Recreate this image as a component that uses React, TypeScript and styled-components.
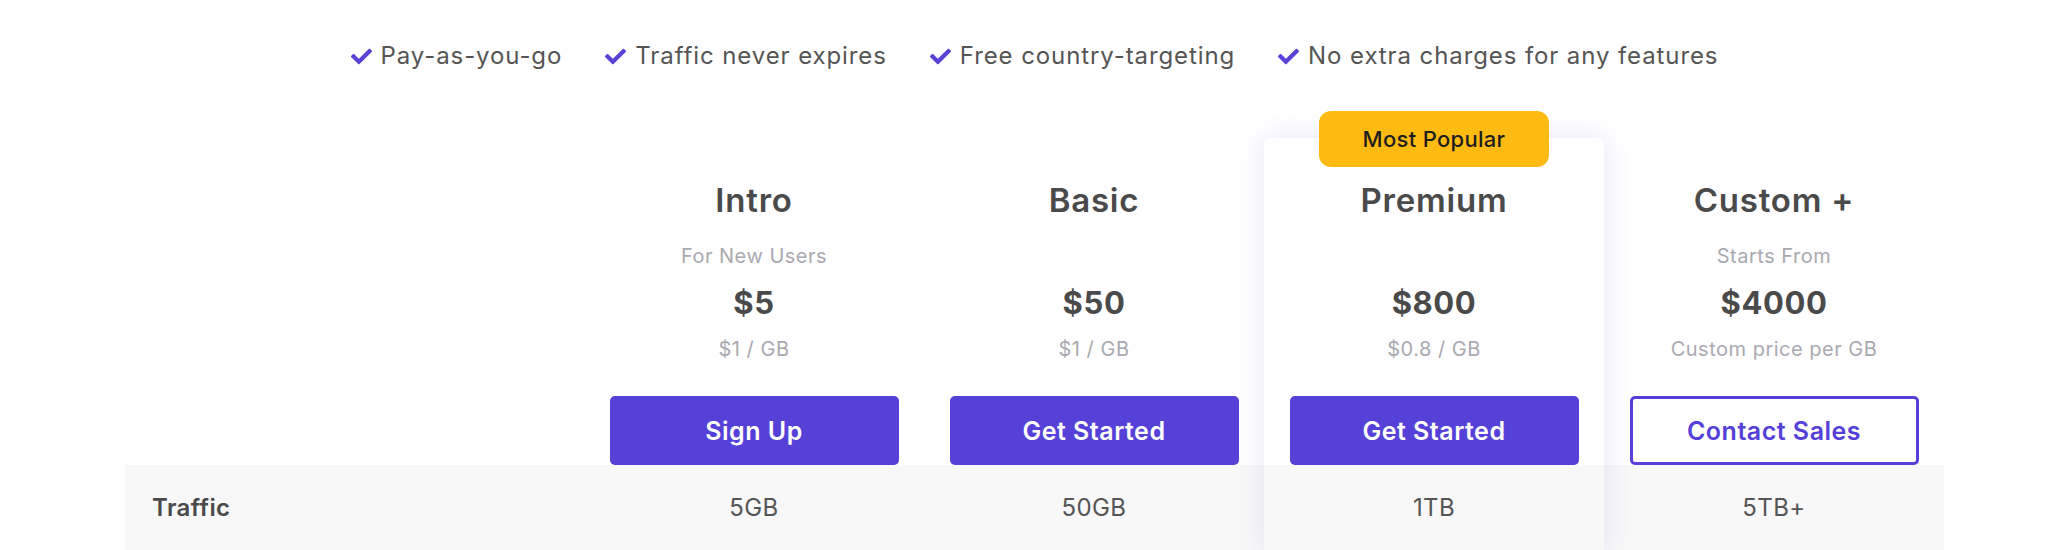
import React from "react";
import styled, { createGlobalStyle } from "styled-components";
import { FaCheck } from "react-icons/fa";

const GlobalStyle = createGlobalStyle`
  html, body { margin: 0; padding: 0; background: #ffffff; }
  body { font-family: Inter, "Open Sans", sans-serif; color: #4a4a4a; }
  * { box-sizing: border-box; }
`;

const Page = styled.div`
  width: 1819px;
  margin-left: 125px;
  padding-top: 41px;
`;

const Features = styled.ul`
  list-style: none;
  margin: 0 0 67px;
  padding: 0;
  display: flex;
  justify-content: center;
  gap: 43px;
  height: 30px;
`;

const Feature = styled.li`
  display: flex;
  align-items: center;
  gap: 9px;
  font-size: 24px;
  letter-spacing: 0.9px;
  line-height: 30px;
  color: #555555;
  svg { color: #5a42d6; width: 21px; height: 21px; }
`;

const Table = styled.div`
  display: grid;
  grid-template-columns: 459px repeat(4, 340px);
  grid-template-rows: auto 85px;
  position: relative;
`;

const RowBand = styled.div`
  grid-column: 1 / -1;
  grid-row: 2;
  background: #f8f8f8;
  z-index: 0;
`;

const FeaturedCard = styled.div`
  grid-column: 4;
  grid-row: 1 / span 2;
  background: #ffffff;
  border-radius: 6px 6px 0 0;
  box-shadow: 0 0 28px rgba(92, 70, 230, 0.14);
  position: relative;
  z-index: 1;
`;

const Badge = styled.div`
  position: absolute;
  top: -27px;
  left: 50%;
  transform: translateX(-50%);
  width: 230px;
  height: 56px;
  border-radius: 12px;
  background: #ffbb12;
  color: #1e1e1e;
  font-size: 22px;
  font-weight: 500;
  letter-spacing: 0.3px;
  display: flex;
  align-items: center;
  justify-content: center;
`;

const PlanHead = styled.div<{ $col: number }>`
  grid-column: ${(p) => p.$col};
  grid-row: 1;
  position: relative;
  z-index: 2;
  display: flex;
  flex-direction: column;
  align-items: center;
  padding: 42px 25px 0;
  text-align: center;
`;

const PlanName = styled.div`
  font-size: 33px;
  font-weight: 600;
  letter-spacing: 0.8px;
  line-height: 40px;
  color: #4a4a4a;
`;

const Subtitle = styled.div`
  margin-top: 22px;
  font-size: 20px;
  letter-spacing: 0.5px;
  line-height: 28px;
  height: 28px;
  color: #a9a9b0;
`;

const Price = styled.div`
  margin-top: 13px;
  font-size: 31px;
  font-weight: 700;
  letter-spacing: 0.6px;
  line-height: 40px;
  color: #4a4a4a;
`;

const PerUnit = styled.div`
  margin-top: 12px;
  font-size: 20px;
  letter-spacing: 0.5px;
  line-height: 28px;
  color: #a9a9b0;
`;

const Button = styled.button<{ $outline?: boolean }>`
  margin-top: 33px;
  width: 289px;
  height: 69px;
  border-radius: 5px;
  font-family: inherit;
  font-size: 25px;
  font-weight: 600;
  letter-spacing: 0.5px;
  cursor: pointer;
  background: ${(p) => (p.$outline ? "#ffffff" : "#5540d8")};
  color: ${(p) => (p.$outline ? "#5540d8" : "#ffffff")};
  border: ${(p) => (p.$outline ? "3px solid #5540d8" : "none")};
`;

const Cell = styled.div<{ $col: number; $featured?: boolean }>`
  grid-column: ${(p) => p.$col};
  grid-row: 2;
  position: relative;
  z-index: 2;
  display: flex;
  align-items: center;
  justify-content: center;
  font-size: 24px;
  letter-spacing: 0.4px;
  color: #555555;
  background: ${(p) => (p.$featured ? "#f8f8f8" : "transparent")};
`;

const LabelCell = styled.div`
  grid-column: 1;
  grid-row: 2;
  position: relative;
  z-index: 2;
  display: flex;
  align-items: center;
  padding-left: 27px;
  font-size: 24px;
  font-weight: 600;
  letter-spacing: 0.4px;
  color: #4a4a4a;
`;

type Plan = {
  name: string;
  subtitle?: string;
  price: string;
  unit: string;
  cta: string;
  outline?: boolean;
  traffic: string;
  featured?: boolean;
};

const plans: Plan[] = [
  { name: "Intro", subtitle: "For New Users", price: "$5", unit: "$1 / GB", cta: "Sign Up", traffic: "5GB" },
  { name: "Basic", price: "$50", unit: "$1 / GB", cta: "Get Started", traffic: "50GB" },
  { name: "Premium", price: "$800", unit: "$0.8 / GB", cta: "Get Started", traffic: "1TB", featured: true },
  { name: "Custom +", subtitle: "Starts From", price: "$4000", unit: "Custom price per GB", cta: "Contact Sales", outline: true, traffic: "5TB+" },
];

const features = [
  "Pay-as-you-go",
  "Traffic never expires",
  "Free country-targeting",
  "No extra charges for any features",
];

export default function App() {
  return (
    <>
      <GlobalStyle />
      <Page>
        <Features>
          {features.map((f) => (
            <Feature key={f}>
              <FaCheck />
              {f}
            </Feature>
          ))}
        </Features>
        <Table>
          <RowBand />
          <FeaturedCard>
            <Badge>Most Popular</Badge>
          </FeaturedCard>
          {plans.map((p, i) => (
            <PlanHead key={p.name} $col={i + 2}>
              <PlanName>{p.name}</PlanName>
              <Subtitle>{p.subtitle ?? ""}</Subtitle>
              <Price>{p.price}</Price>
              <PerUnit>{p.unit}</PerUnit>
              <Button $outline={p.outline}>{p.cta}</Button>
            </PlanHead>
          ))}
          <LabelCell>Traffic</LabelCell>
          {plans.map((p, i) => (
            <Cell key={p.name} $col={i + 2} $featured={p.featured}>
              {p.traffic}
            </Cell>
          ))}
        </Table>
      </Page>
    </>
  );
}
